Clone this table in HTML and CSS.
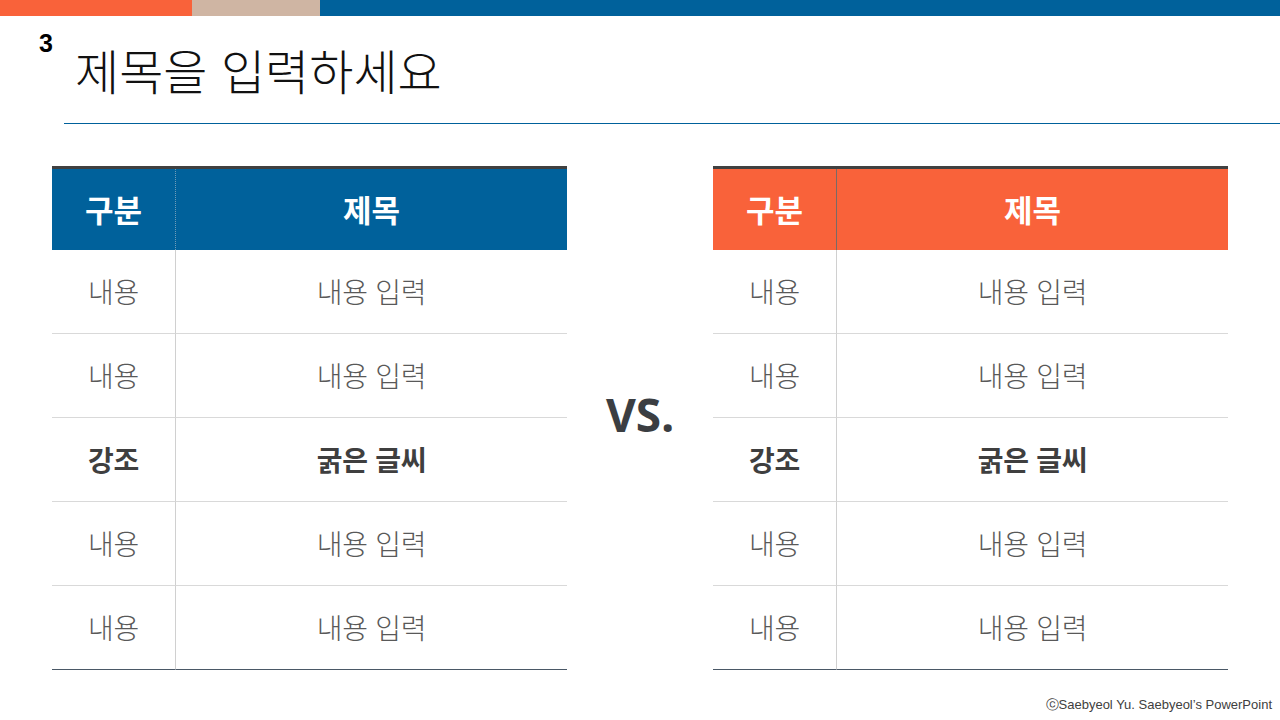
FILE: index.html
```html
<!DOCTYPE html>
<html lang="ko">
<head>
<meta charset="utf-8">
<title>제목을 입력하세요</title>
<link rel="stylesheet" href="styles.css">
</head>
<body>
<div class="slide">
  <div class="topbar">
    <div class="seg seg-orange"></div>
    <div class="seg seg-beige"></div>
    <div class="seg seg-blue"></div>
  </div>
  <header class="head">
    <span class="num">3</span>
    <h1 class="title">제목을 입력하세요</h1>
  </header>
  <div class="rule"></div>
  <main class="content">
    <div class="table table-blue">
      <div class="cell hcell col1">구분</div>
      <div class="cell hcell">제목</div>
      <div class="cell col1">내용</div><div class="cell">내용 입력</div>
      <div class="cell col1">내용</div><div class="cell">내용 입력</div>
      <div class="cell col1 strong">강조</div><div class="cell strong">굵은 글씨</div>
      <div class="cell col1">내용</div><div class="cell">내용 입력</div>
      <div class="cell col1 last">내용</div><div class="cell last">내용 입력</div>
    </div>
    <div class="vs">VS.</div>
    <div class="table table-orange">
      <div class="cell hcell col1">구분</div>
      <div class="cell hcell">제목</div>
      <div class="cell col1">내용</div><div class="cell">내용 입력</div>
      <div class="cell col1">내용</div><div class="cell">내용 입력</div>
      <div class="cell col1 strong">강조</div><div class="cell strong">굵은 글씨</div>
      <div class="cell col1">내용</div><div class="cell">내용 입력</div>
      <div class="cell col1 last">내용</div><div class="cell last">내용 입력</div>
    </div>
  </main>
  <footer class="footer">ⓒSaebyeol Yu. Saebyeol’s PowerPoint</footer>
</div>
</body>
</html>
```
FILE: styles.css
```css
* { box-sizing: border-box; margin: 0; padding: 0; }
html, body { width: 1280px; height: 720px; overflow: hidden; background: #fff; }
body { font-family: "Noto Sans CJK KR", "Noto Sans", sans-serif; }
.slide { width: 1280px; height: 720px; display: flex; flex-direction: column; }

.topbar { display: flex; height: 16px; flex: none; }
.seg-orange { width: 192px; background: #f9623a; }
.seg-beige { width: 128px; background: #cfb5a3; }
.seg-blue { flex: 1; background: #00619b; }

.head { height: 107px; display: flex; align-items: flex-start; padding-left: 39px; flex: none; }
.num { font-family: "Liberation Sans", Arial, sans-serif; font-weight: 700; font-size: 25px; line-height: 1; margin-top: 15px; color: #000; width: 36px; }
.title { font-weight: 300; font-size: 48px; line-height: 1; margin-top: 29px; color: #111; letter-spacing: 0; }

.rule { height: 1px; background: #00619b; margin-left: 64px; flex: none; }

.content { display: flex; align-items: flex-start; padding-left: 52px; margin-top: 42px; flex: none; }
.table { display: grid; grid-template-columns: 124px 391px; grid-template-rows: 81px repeat(5, 84px); border-top: 3px solid #404040; }
.cell { display: flex; align-items: center; justify-content: center; font-size: 28px; font-weight: 300; color: #595959; border-bottom: 1px solid #d9d9d9; line-height: 1; padding-bottom: 2px; letter-spacing: -0.3px; }
.col1 { border-right: 1px solid #d0d0d0; }
.hcell { height: 81px; align-self: start; font-weight: 700; font-size: 31px; color: #fff; border-bottom: none; letter-spacing: 0; }
.table-blue .hcell { background: #00619b; }
.table-blue .hcell.col1 { border-right: 1px dotted #6f9cb8; }
.table-orange .hcell { background: #f9623a; }
.table-orange .hcell.col1 { border-right: 1px solid #7a6a66; }
.strong { font-weight: 700; color: #3f3f3f; }
.last { border-bottom: 1px solid #4a5866; }

.vs { width: 146px; text-align: center; font-family: "Noto Sans", sans-serif; font-weight: 700; font-size: 46px; color: #3b3e42; line-height: 1; margin-top: 225px; }

.footer { margin-top: auto; margin-bottom: 6px; align-self: flex-end; padding-right: 8px; font-family: "Liberation Sans", Arial, sans-serif; font-size: 13px; color: #404040; }
```
